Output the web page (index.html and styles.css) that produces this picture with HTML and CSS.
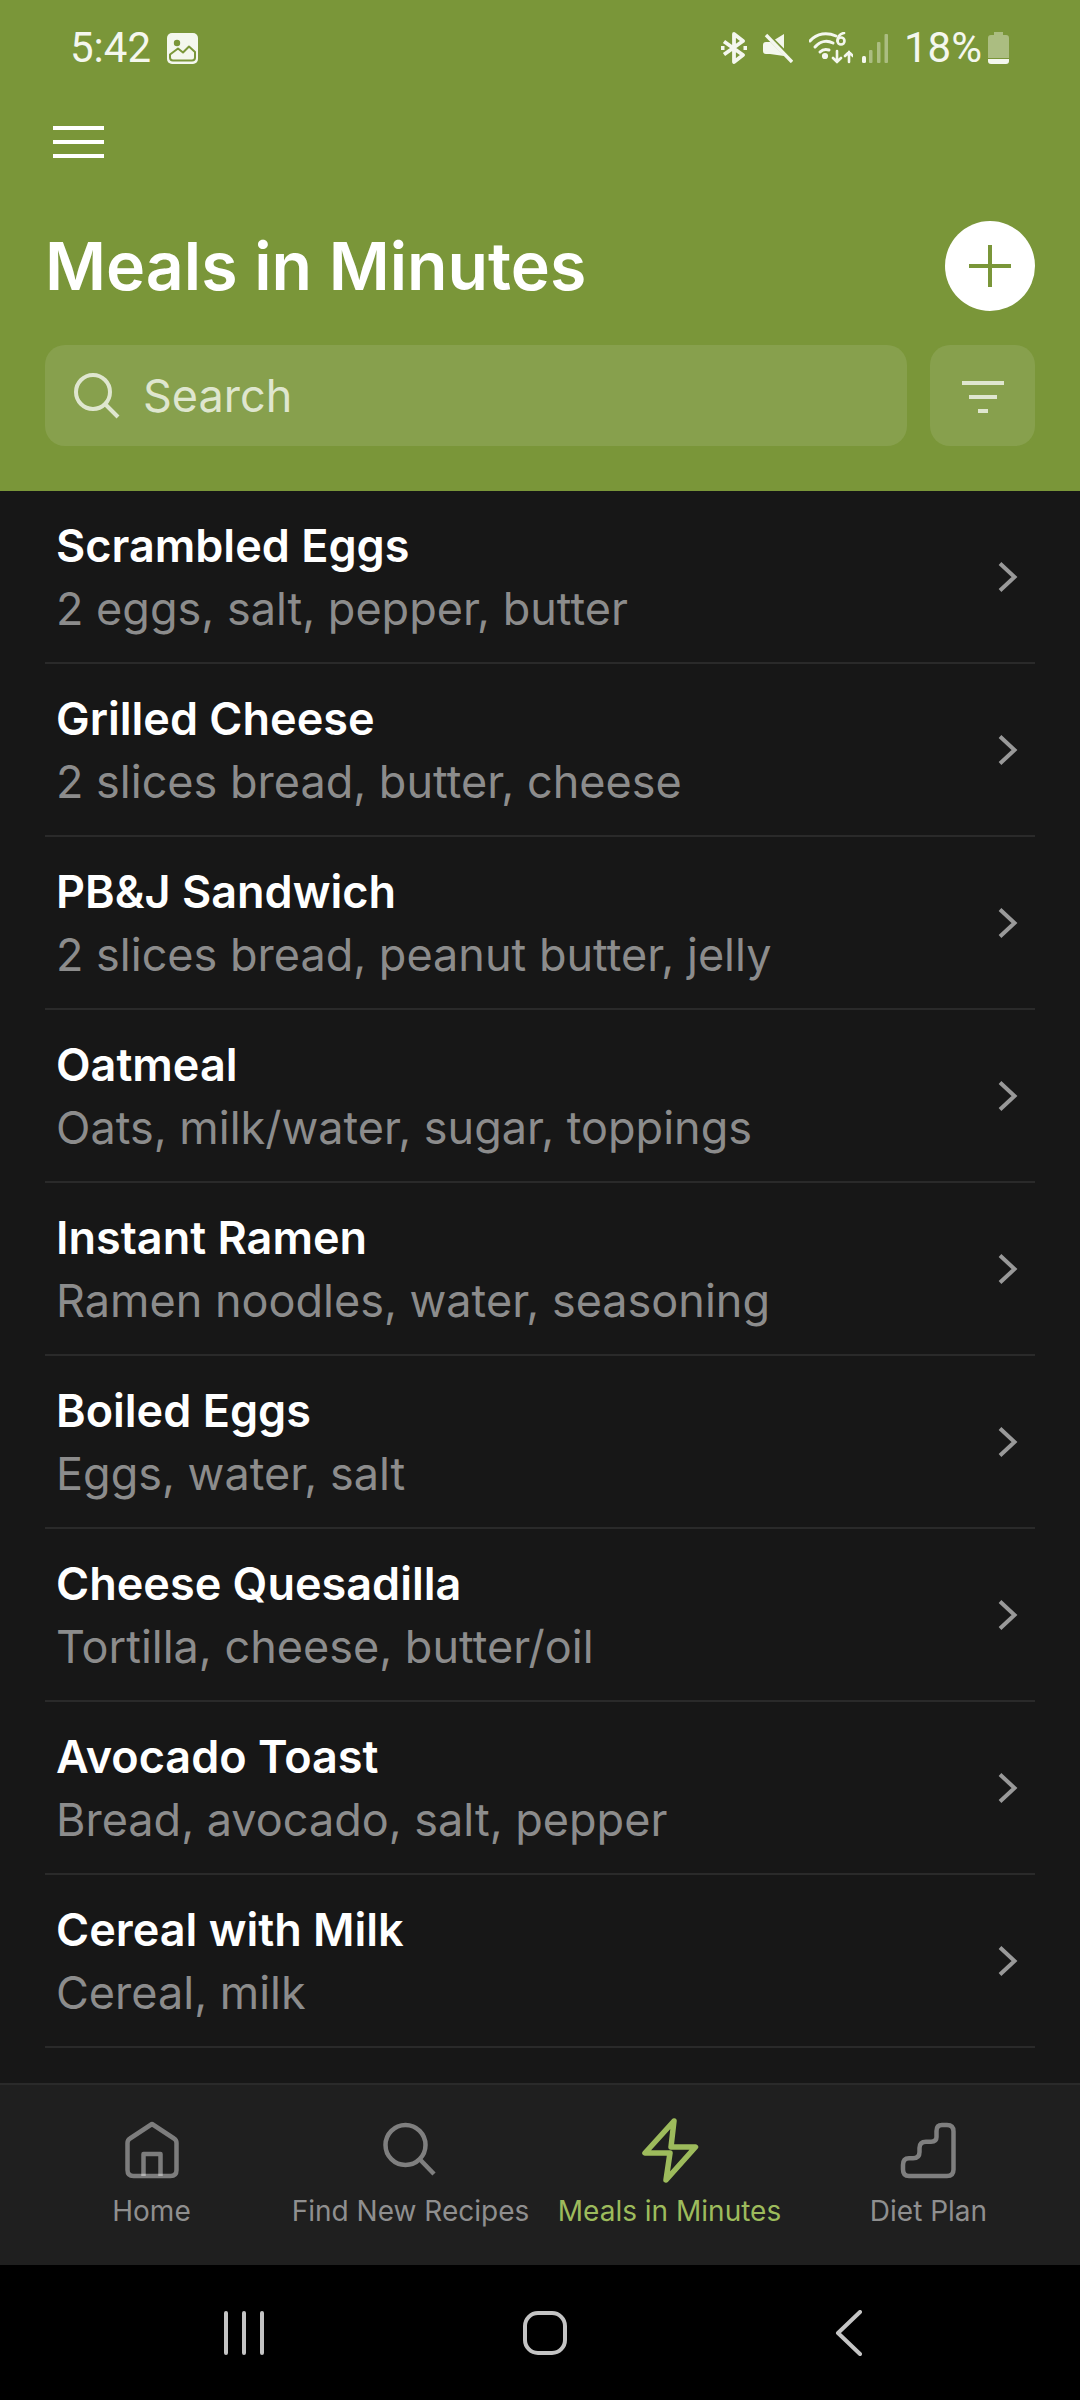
FILE: index.html
```html
<!DOCTYPE html>
<html lang="en">
<head>
<meta charset="utf-8">
<title>Meals in Minutes</title>
<link rel="stylesheet" href="styles.css">
</head>
<body>
<div class="page">
  <header class="header">
    <div class="status">
      <div class="status-left">
        <span class="status-text">5:42</span>
        <svg class="ico-pic" width="31" height="31" viewBox="0 0 31 31"><rect width="31" height="31" rx="5" fill="#f4f7ee"/><circle cx="10" cy="10" r="3.200" fill="#7a9639"/><path fill="none" stroke="#7a9639" stroke-width="2" stroke-linejoin="round" d="M3 21.500L11 15.500L16 19.500L22 13.500L28 19V24.500Q28 27.500 25 27.500H6Q3 27.500 3 24.500Z"/></svg>
      </div>
      <div class="status-right">
        <svg width="26" height="32" viewBox="0 0 26 32" fill="none" stroke="#f4f7ee" stroke-width="3.800" stroke-linejoin="round"><path d="M3 9.500L22 23L13 30V2L22 9L3 22.500"/><path d="M0 16H3.500M22.500 16H26" stroke-width="4"/></svg>
        <svg class="ico-mute" width="30" height="30" viewBox="0 0 30 30"><path fill="#f4f7ee" d="M0 12Q0 9 3 9H8L21 1V23L7 21H3Q0 21 0 18Z"/><path d="M1 -1L30 28" stroke="#7a9639" stroke-width="5"/><path d="M3 2L29 29" stroke="#f4f7ee" stroke-width="3.400"/></svg>
        <svg class="ico-wifi" width="44" height="32" viewBox="0 0 44 32" fill="none" stroke="#f4f7ee" stroke-width="3" stroke-linecap="round"><path d="M1 9C8 1 18 0 27 4"/><path d="M6 15C11 9 18 8 24 11"/><path d="M11 20C14 17 17 17 20 18"/><circle cx="16" cy="24" r="1.600" fill="#f4f7ee"/><circle cx="32" cy="9" r="3.500" stroke-width="2.600"/><path d="M35 1Q29 2 28.500 9" stroke-width="2.600"/><path d="M28 19V30M24 26L28 30L32 26M40 30V20M36 24L40 20L44 24" stroke-width="2.600"/></svg>
        <svg class="ico-sig" width="26" height="30" viewBox="0 0 26 30" fill="#f4f7ee"><rect x="0" y="23" width="4" height="7" rx="1.500"/><g opacity=".4"><rect x="7" y="17" width="3.500" height="13" rx="1"/><rect x="15" y="9" width="3.500" height="21" rx="1"/><rect x="22.500" y="1" width="3.500" height="29" rx="1"/></g></svg>
        <span class="status-text pct">18%</span>
        <svg class="ico-bat" width="21" height="32" viewBox="0 0 21 32"><path fill="#f4f7ee" opacity=".4" d="M6 0H15V3H18Q21 3 21 6V26H0V6Q0 3 3 3H6Z"/><path fill="#f4f7ee" d="M0 27H21V29Q21 32 18 32H3Q0 32 0 29Z"/></svg>
      </div>
    </div>
    <button class="menu" type="button" aria-label="Menu">
      <span class="menu-line"></span><span class="menu-line"></span><span class="menu-line"></span>
    </button>
    <div class="title-row">
      <h1 class="title">Meals in Minutes</h1>
      <div class="add"><svg width="44" height="44" viewBox="0 0 44 44" stroke="#7a9639" stroke-width="4"><path d="M1 22H43M22 1V43"/></svg></div>
    </div>
    <div class="search-row">
      <div class="search">
        <svg width="46" height="46" viewBox="0 0 46 46" fill="none" stroke="#dfe6cf" stroke-width="4"><circle cx="19" cy="19" r="17"/><path d="M31 31L44 44"/></svg>
        <span class="search-text">Search</span>
      </div>
      <div class="filter"><span class="fl fl1"></span><span class="fl fl2"></span><span class="fl fl3"></span></div>
    </div>
  </header>

  <main class="list">
    <div class="row"><div class="row-text"><div class="name">Scrambled Eggs</div><div class="sub">2 eggs, salt, pepper, butter</div></div><svg class="chev" width="22" height="34" viewBox="0 0 22 34"><path d="M3 3.500L17.500 17L3 30.500"/></svg></div>
    <div class="row"><div class="row-text"><div class="name">Grilled Cheese</div><div class="sub">2 slices bread, butter, cheese</div></div><svg class="chev" width="22" height="34" viewBox="0 0 22 34"><path d="M3 3.500L17.500 17L3 30.500"/></svg></div>
    <div class="row"><div class="row-text"><div class="name">PB&amp;J Sandwich</div><div class="sub">2 slices bread, peanut butter, jelly</div></div><svg class="chev" width="22" height="34" viewBox="0 0 22 34"><path d="M3 3.500L17.500 17L3 30.500"/></svg></div>
    <div class="row"><div class="row-text"><div class="name">Oatmeal</div><div class="sub">Oats, milk/water, sugar, toppings</div></div><svg class="chev" width="22" height="34" viewBox="0 0 22 34"><path d="M3 3.500L17.500 17L3 30.500"/></svg></div>
    <div class="row"><div class="row-text"><div class="name">Instant Ramen</div><div class="sub">Ramen noodles, water, seasoning</div></div><svg class="chev" width="22" height="34" viewBox="0 0 22 34"><path d="M3 3.500L17.500 17L3 30.500"/></svg></div>
    <div class="row"><div class="row-text"><div class="name">Boiled Eggs</div><div class="sub">Eggs, water, salt</div></div><svg class="chev" width="22" height="34" viewBox="0 0 22 34"><path d="M3 3.500L17.500 17L3 30.500"/></svg></div>
    <div class="row"><div class="row-text"><div class="name">Cheese Quesadilla</div><div class="sub">Tortilla, cheese, butter/oil</div></div><svg class="chev" width="22" height="34" viewBox="0 0 22 34"><path d="M3 3.500L17.500 17L3 30.500"/></svg></div>
    <div class="row"><div class="row-text"><div class="name">Avocado Toast</div><div class="sub">Bread, avocado, salt, pepper</div></div><svg class="chev" width="22" height="34" viewBox="0 0 22 34"><path d="M3 3.500L17.500 17L3 30.500"/></svg></div>
    <div class="row"><div class="row-text"><div class="name">Cereal with Milk</div><div class="sub">Cereal, milk</div></div><svg class="chev" width="22" height="34" viewBox="0 0 22 34"><path d="M3 3.500L17.500 17L3 30.500"/></svg></div>
  </main>

  <nav class="tabs">
    <div class="tab">
      <svg class="tab-ico" width="64" height="68" viewBox="0 0 64 68" fill="none" stroke="rgba(255,255,255,.42)" stroke-width="4.500" stroke-linejoin="round"><path d="M32 7L10 21.500Q7.500 23 7.500 26V53Q7.500 59 13.500 59H50.500Q56.500 59 56.500 53V26Q56.500 23 54 21.500Z"/><path d="M23.500 59V37H40.500V59"/></svg>
      <span class="tab-label">Home</span>
    </div>
    <div class="tab">
      <svg class="tab-ico" width="64" height="68" viewBox="0 0 64 68" fill="none" stroke="#7f7f7f" stroke-width="4.500"><circle cx="26.500" cy="28" r="20"/><path d="M41 42.500L55 57"/></svg>
      <span class="tab-label">Find New Recipes</span>
    </div>
    <div class="tab tab-active">
      <svg class="tab-ico" width="64" height="68" viewBox="0 0 64 68" fill="none" stroke="#9dbb5c" stroke-width="5.500" stroke-linejoin="round"><path d="M36 4L7 36H32L28 63L57.500 30H33Z"/></svg>
      <span class="tab-label">Meals in Minutes</span>
    </div>
    <div class="tab">
      <svg class="tab-ico" width="64" height="68" viewBox="0 0 64 68" fill="none" stroke="#7f7f7f" stroke-width="4.500"><path d="M50 8H45Q39.500 8 39.500 14V20Q39.500 24.700 34 24.700H29Q22.500 24.700 22.500 31V35Q22.500 41.300 16 41.300H12Q6 41.300 6 48V52.500Q6 59 12 59H50Q56.500 59 56.500 52.500V14.500Q56.500 8 50 8Z"/></svg>
      <span class="tab-label">Diet Plan</span>
    </div>
  </nav>

  <div class="sysnav">
    <svg width="40" height="44" viewBox="0 0 40 44" stroke="#c4c4c4" stroke-width="4" stroke-linecap="round"><path d="M2 2V42M20 2V42M38 2V42"/></svg>
    <svg width="44" height="44" viewBox="0 0 44 44" fill="none" stroke="#c4c4c4" stroke-width="4"><rect x="2" y="2" width="40" height="40" rx="13"/></svg>
    <svg width="28" height="46" viewBox="0 0 28 46" fill="none" stroke="#c4c4c4" stroke-width="4" stroke-linecap="round" stroke-linejoin="round"><path d="M25 2L3 23L25 44"/></svg>
  </div>
</div>
</body>
</html>
```
FILE: styles.css
```css
* { box-sizing: border-box; }
html, body { margin: 0; padding: 0; }
body { background: #171717; font-family: "Inter", "Liberation Sans", sans-serif; }
.page { width: 1080px; height: 2400px; display: flex; flex-direction: column; overflow: hidden; }

.header { height: 491px; background: #7a9639; display: flex; flex-direction: column; flex: none; }
.status { height: 96px; padding: 32px 71px 0 70px; display: flex; justify-content: space-between; align-items: flex-start; }
.status-left { display: flex; align-items: center; gap: 16px; height: 32px; }
.status-right { display: flex; align-items: center; gap: 16px; height: 32px; }
.status-text { font-family: "Roboto", sans-serif; font-size: 42px; line-height: 32px; color: #f4f7ee; font-weight: 400; }
.pct { font-size: 42px; }
.ico-bat { margin-left: -10px; }
.ico-sig { margin-left: -7px; }

.menu { display: flex; flex-direction: column; gap: 10px; width: 51px; margin: 30px 0 0 53px; padding: 0; border: 0; background: none; }
.menu-line { display: block; height: 4px; width: 100%; background: #fff; }

.title-row { display: flex; justify-content: space-between; align-items: center; height: 90px; margin-top: 63px; padding: 0 45px; }
.title { margin: 0; font-size: 66.2px; font-weight: 600; color: #fff; }
.add { width: 90px; height: 90px; border-radius: 50%; background: #fff; display: flex; align-items: center; justify-content: center; }

.search-row { display: flex; gap: 23px; margin-top: 34px; padding: 0 45px; height: 101px; }
.search { flex: 1; background: #87a04d; border-radius: 20px; display: flex; align-items: center; gap: 23px; padding-left: 29px; }
.search-text { font-size: 45px; color: #dfe6cf; }
.filter { width: 105px; padding-top: 3px; background: #87a04d; border-radius: 20px; display: flex; flex-direction: column; align-items: center; justify-content: center; gap: 10px; }
.fl { display: block; height: 4px; background: #dfe6cf; }
.fl1 { width: 42px; } .fl2 { width: 28px; } .fl3 { width: 10px; }

.list { flex: 1; display: flex; flex-direction: column; }
.row { height: 173px; margin: 0 45px; padding: 0 16px 0 11px; border-bottom: 2px solid #2a2a2a; display: flex; align-items: center; justify-content: space-between; flex: none; }
.row-text { display: flex; flex-direction: column; margin-top: 1px; }
.name { font-size: 45px; line-height: 62px; font-weight: 600; color: #fff; }
.sub { font-size: 45px; line-height: 62px; margin-top: 1px; color: #8c8c8c; }
.chev { fill: none; stroke: #999; stroke-width: 4; flex: none; }

.tabs { height: 182px; flex: none; background: #1f1f1f; border-top: 2px solid #2a2a2a; display: grid; grid-template-columns: repeat(4, 259px); padding: 32px 22px 0; }
.tab { display: flex; flex-direction: column; align-items: center; }
.tab-label { font-size: 28px; line-height: 34px; color: #8f8f8f; margin-top: 9px; white-space: nowrap; }
.tab-active .tab-label { color: #9dbb5c; }
.tab-ico { flex: none; }

.sysnav { height: 135px; flex: none; background: #000; display: flex; align-items: center; padding-left: 224px; }
.sysnav svg:nth-child(1) { margin-right: 259px; }
.sysnav svg:nth-child(2) { margin-right: 268px; }
```
